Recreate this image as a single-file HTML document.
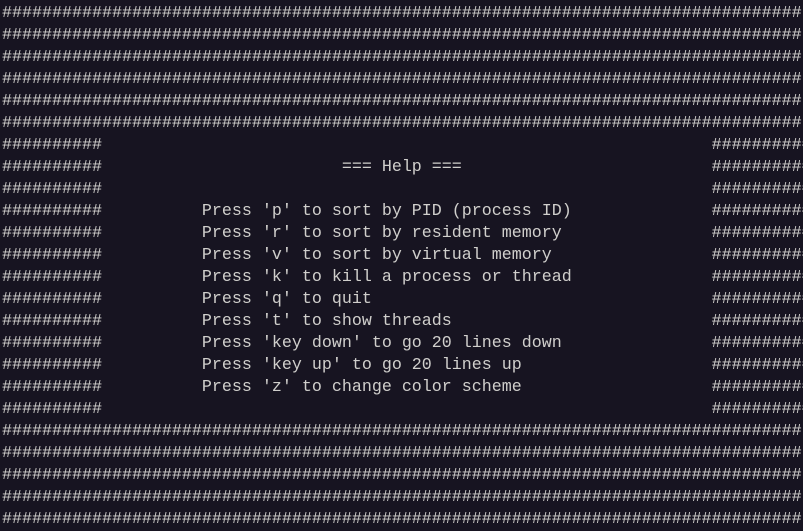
<!DOCTYPE html>
<html><head><style>
html,body{margin:0;padding:0;background:#171421;width:803px;height:531px;overflow:hidden}
pre{margin:0;padding:3px 0 0 2px;font-family:"Liberation Mono","DejaVu Sans Mono",monospace;font-size:16.667px;line-height:22px;color:#d0cfcc;white-space:pre}
</style></head><body><pre>################################################################################
################################################################################
################################################################################
################################################################################
################################################################################
################################################################################
##########                                                             ##########
##########                        === Help ===                         ##########
##########                                                             ##########
##########          Press 'p' to sort by PID (process ID)              ##########
##########          Press 'r' to sort by resident memory               ##########
##########          Press 'v' to sort by virtual memory                ##########
##########          Press 'k' to kill a process or thread              ##########
##########          Press 'q' to quit                                  ##########
##########          Press 't' to show threads                          ##########
##########          Press 'key down' to go 20 lines down               ##########
##########          Press 'key up' to go 20 lines up                   ##########
##########          Press 'z' to change color scheme                   ##########
##########                                                             ##########
################################################################################
################################################################################
################################################################################
################################################################################
################################################################################</pre></body></html>
